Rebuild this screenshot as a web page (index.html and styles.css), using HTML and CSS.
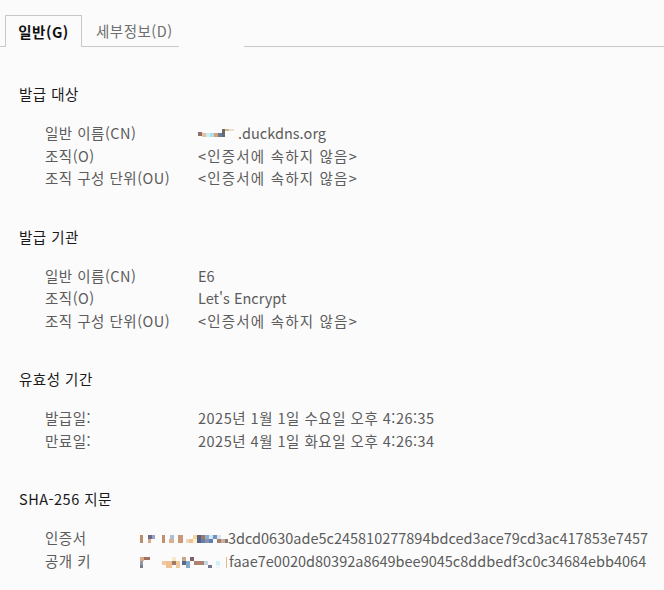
FILE: index.html
```html
<!DOCTYPE html>
<html lang="ko">

<head>
    <meta charset="UTF-8">
    <title>인증서 뷰어</title>
    <link rel="stylesheet" href="styles.css">
</head>

<body>

    <!-- Tabs -->
    <div class="tabs">
        <div class="tab-edge"></div>
        <div class="tab active ko">일반(G)</div>
        <div class="tab ko">세부정보(D)</div>
        <div class="tab-gap"></div>
        <div class="tab-fill"></div>
    </div>

    <div class="content">

        <section class="group">
            <h2 class="ko">발급 대상</h2>
            <div class="rows">
                <span class="label ko">일반 이름(CN)</span>
                <span class="value"><svg class="blur" width="40" height="12" viewBox="0 0 40 12">
                        <rect x="0" y="4" width="4" height="4" fill="#8a6f6a" />
                        <rect x="4" y="5" width="4" height="4" fill="#e8c0a0" />
                        <rect x="8" y="5" width="4" height="4" fill="#c9eef5" />
                        <rect x="12" y="5" width="4" height="4" fill="#a8e0ee" />
                        <rect x="16" y="5" width="4" height="4" fill="#d7a270" />
                        <rect x="20" y="5" width="4" height="4" fill="#687c9e" />
                        <rect x="24" y="1" width="3" height="8" fill="#6a6a6a" />
                        <rect x="27" y="1" width="4" height="2" fill="#d8b888" />
                        <rect x="31" y="1" width="5" height="2" fill="#e8e0d0" />
                    </svg>.duckdns.org</span>
                <span class="label ko">조직(O)</span>
                <span class="value none">&lt;인증서에 속하지 않음&gt;</span>
                <span class="label ko">조직 구성 단위(OU)</span>
                <span class="value none">&lt;인증서에 속하지 않음&gt;</span>
            </div>
        </section>

        <section class="group">
            <h2 class="ko">발급 기관</h2>
            <div class="rows">
                <span class="label ko">일반 이름(CN)</span>
                <span class="value">E6</span>
                <span class="label ko">조직(O)</span>
                <span class="value">Let's Encrypt</span>
                <span class="label ko">조직 구성 단위(OU)</span>
                <span class="value none">&lt;인증서에 속하지 않음&gt;</span>
            </div>
        </section>

        <section class="group">
            <h2 class="ko">유효성 기간</h2>
            <div class="rows">
                <span class="label ko">발급일:</span>
                <span class="value ko">2025년 1월 1일 수요일 오후 4:26:35</span>
                <span class="label ko">만료일:</span>
                <span class="value ko">2025년 4월 1일 화요일 오후 4:26:34</span>
            </div>
        </section>

        <section class="group">
            <h2 class="ko">SHA-256 지문</h2>
            <div class="rows hash">
                <span class="label ko">인증서</span>
                <span class="value"><svg class="blur" width="88" height="12" viewBox="0 0 88 12">
                        <rect x="0" y="2" width="3" height="8" fill="#b89070" />
                        <rect x="8" y="2" width="4" height="4" fill="#6a6a8a" />
                        <rect x="12" y="2" width="3" height="4" fill="#9aa0c0" />
                        <rect x="8" y="6" width="3" height="4" fill="#d8a888" />
                        <rect x="22" y="2" width="3" height="8" fill="#c09070" />
                        <rect x="30" y="2" width="4" height="4" fill="#a8c0d8" />
                        <rect x="29" y="6" width="5" height="4" fill="#d8b090" />
                        <rect x="38" y="2" width="5" height="8" fill="#c89878" />
                        <rect x="46" y="6" width="3" height="4" fill="#e8d8c8" />
                        <rect x="49" y="6" width="4" height="4" fill="#f0c090" />
                        <rect x="53" y="2" width="4" height="4" fill="#f0d8a0" />
                        <rect x="53" y="6" width="4" height="4" fill="#fff0d0" />
                        <rect x="57" y="2" width="4" height="8" fill="#5a6080" />
                        <rect x="61" y="2" width="4" height="4" fill="#a07868" />
                        <rect x="61" y="6" width="4" height="4" fill="#6080b0" />
                        <rect x="65" y="2" width="4" height="4" fill="#88b0d8" />
                        <rect x="65" y="6" width="4" height="4" fill="#9090a0" />
                        <rect x="69" y="2" width="4" height="4" fill="#d0e8f8" />
                        <rect x="69" y="6" width="4" height="4" fill="#5a80b0" />
                        <rect x="73" y="2" width="4" height="4" fill="#7890b8" />
                        <rect x="77" y="2" width="4" height="4" fill="#d8e8f0" />
                        <rect x="77" y="6" width="4" height="4" fill="#a88070" />
                        <rect x="81" y="6" width="4" height="4" fill="#c8b0a0" />
                        <rect x="85" y="6" width="3" height="4" fill="#8a7a7a" />
                    </svg>3dcd0630ade5c245810277894bdced3ace79cd3ac417853e7457</span>
                <span class="label ko">공개 키</span>
                <span class="value"><svg class="blur" width="89" height="12" viewBox="0 0 89 12">
                        <rect x="0" y="1" width="4" height="4" fill="#d8a888" />
                        <rect x="4" y="1" width="6" height="3" fill="#a07060" />
                        <rect x="0" y="5" width="3" height="4" fill="#9098a8" />
                        <rect x="0" y="9" width="3" height="3" fill="#7a7a8a" />
                        <rect x="22" y="5" width="4" height="4" fill="#f0c8a0" />
                        <rect x="26" y="5" width="6" height="7" fill="#f0c090" />
                        <rect x="32" y="1" width="4" height="4" fill="#fbe8c8" />
                        <rect x="32" y="5" width="4" height="4" fill="#a07868" />
                        <rect x="36" y="5" width="4" height="7" fill="#f0c8a0" />
                        <rect x="42" y="1" width="4" height="4" fill="#c8a888" />
                        <rect x="42" y="5" width="4" height="4" fill="#5a6a8a" />
                        <rect x="46" y="5" width="4" height="7" fill="#88a8c8" />
                        <rect x="50" y="1" width="4" height="4" fill="#806060" />
                        <rect x="54" y="5" width="10" height="4" fill="#b08070" />
                        <rect x="64" y="5" width="4" height="4" fill="#c0d8e8" />
                        <rect x="68" y="9" width="4" height="3" fill="#707890" />
                        <rect x="76" y="5" width="4" height="4" fill="#d0f0f8" />
                        <rect x="76" y="9" width="4" height="3" fill="#e8f8fb" />
                        <rect x="86" y="1" width="1" height="11" fill="#e8b888" />
                    </svg>faae7e0020d80392a8649bee9045c8ddbedf3c0c34684ebb4064</span>
            </div>
        </section>

    </div>

</body>

</html>
```

FILE: styles.css
```css
/* Page */
body {
    margin: 0;
    background: #fbfbfb;
    font-family: 'Noto Sans CJK KR', 'Noto Sans', sans-serif;
    font-size: 14.5px;
    color: #5c5c5c;
}

/* Korean text runs a little wider in the original font */
.ko {
    letter-spacing: 0.5px;
}

/* Tab strip */
.tabs {
    display: flex;
    align-items: flex-end;
    padding-top: 15px;
    height: 32px;
}

.tab-edge {
    width: 5px;
    border-bottom: 1px solid #c8c8c8;
}

.tab {
    height: 31px;
    line-height: 31px;
    padding: 0 6px 0 14px;
    white-space: nowrap;
    color: #6e6e6e;
    border-bottom: 1px solid #c8c8c8;
}

.tab.active {
    box-sizing: border-box;
    width: 77px;
    padding: 0;
    text-align: center;
    border: 1px solid #c8c8c8;
    border-bottom: none;
    height: 32px;
    color: #111;
    font-weight: bold;
}

.tab-gap {
    width: 65px;
}

.tab-fill {
    flex: 1;
    border-bottom: 1px solid #c8c8c8;
}

/* Sections */
.content {
    padding: 36px 0 0 19px;
}

.group {
    margin-bottom: 36px;
}

h2 {
    margin: 0 0 17px 0;
    font-size: 14.5px;
    font-weight: normal;
    line-height: 22px;
    color: #1a1a1a;
}

.rows {
    display: grid;
    grid-template-columns: 153px auto;
    padding-left: 26px;
    line-height: 22.5px;
}

.rows.hash {
    grid-template-columns: 95px auto;
}

.value {
    white-space: nowrap;
}

.value.none {
    letter-spacing: 1.2px;
}

.blur {
    vertical-align: -1px;
}
```
